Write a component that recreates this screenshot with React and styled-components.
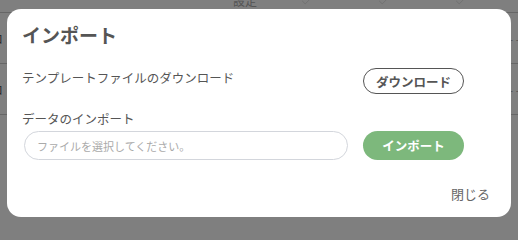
import React from "react";
import styled, { createGlobalStyle } from "styled-components";
import { Check } from "lucide-react";

const GlobalStyle = createGlobalStyle`
  html, body {
    margin: 0;
    padding: 0;
    background: #fff;
    overflow: hidden;
  }
  body {
    font-family: "Noto Sans CJK JP", "Noto Sans", sans-serif;
    color: #555;
  }
`;

const rows = [0, 1];

export default function App() {
  return (
    <>
      <GlobalStyle />
      <Page>
        <HeaderRow>
          <Cell />
          <HeadCell>設定</HeadCell>
          <Cell><Check size={14} strokeWidth={1.5} /></Cell>
          <Cell><Check size={14} strokeWidth={1.5} /></Cell>
          <Cell><Check size={14} strokeWidth={1.5} /></Cell>
          <Cell />
        </HeaderRow>
        {rows.map((r) => (
          <BodyRow key={r}>
            <FirstCell>ロ</FirstCell>
            <Cell />
            <Cell />
            <Cell />
            <Cell />
            <LastCell>- -</LastCell>
          </BodyRow>
        ))}
      </Page>

      <Overlay>
        <Modal>
          <Title>インポート</Title>
          <Section>
            <Row $align="flex-start">
              <Label>テンプレートファイルのダウンロード</Label>
              <OutlineButton>ダウンロード</OutlineButton>
            </Row>
            <Label $gap={15}>データのインポート</Label>
            <Row $align="center" $gap={2}>
              <FileInput placeholder="ファイルを選択してください。" readOnly />
              <FilledButton>インポート</FilledButton>
            </Row>
          </Section>
          <Footer>
            <CloseLink>閉じる</CloseLink>
          </Footer>
        </Modal>
      </Overlay>
    </>
  );
}

const Page = styled.div`
  width: 100%;
  margin-top: -6px;
`;

const gridCols = "222px 46px 77px 77px 77px 1fr";

const HeaderRow = styled.div`
  display: grid;
  grid-template-columns: ${gridCols};
  height: 18px;
  border-bottom: 1px solid #ccc;
  font-size: 13px;
  line-height: 14px;
`;

const BodyRow = styled.div`
  display: grid;
  grid-template-columns: ${gridCols};
  height: 50px;
  border-bottom: 1px solid #ccc;
  align-items: center;
  font-size: 12px;
`;

const Cell = styled.div`
  display: flex;
  justify-content: center;
  color: #ddd;
`;

const HeadCell = styled(Cell)`
  color: #aaa;
  font-size: 12px;
`;

const FirstCell = styled.div`
  margin-left: -9px;
  color: #555;
`;

const LastCell = styled.div`
  text-align: right;
  color: #aaa;
  margin-right: -2px;
`;

const Overlay = styled.div`
  position: fixed;
  inset: 0;
  background: rgba(0, 0, 0, 0.5);
  display: flex;
  align-items: flex-start;
  justify-content: center;
  padding-top: 9px;
`;

const Modal = styled.div`
  width: 504px;
  box-sizing: border-box;
  background: #fff;
  border-radius: 14px;
  padding: 14px 21px 13px 15px;
  display: flex;
  flex-direction: column;
`;

const Title = styled.h2`
  margin: 0;
  font-size: 19px;
  line-height: 24px;
  font-weight: 700;
  color: #555;
`;

const Section = styled.div`
  margin-top: 21px;
  padding-right: 26px;
  display: flex;
  flex-direction: column;
`;

const Row = styled.div`
  display: flex;
  align-items: ${(p) => p.$align};
  justify-content: space-between;
  margin-top: ${(p) => p.$gap || 0}px;
`;

const Label = styled.div`
  font-size: 12.5px;
  line-height: 20px;
  color: #555;
  margin-top: ${(p) => p.$gap || 0}px;
`;

const PillButton = styled.button`
  width: 101px;
  border-radius: 999px;
  font-family: inherit;
  font-size: 12.5px;
  font-weight: 700;
  padding: 0;
  cursor: pointer;
`;

const OutlineButton = styled(PillButton)`
  height: 26px;
  background: #fff;
  border: 1px solid #555;
  color: #555;
`;

const FilledButton = styled(PillButton)`
  height: 29px;
  background: #7db87c;
  border: none;
  color: #fff;
`;

const FileInput = styled.input`
  width: 324px;
  height: 29px;
  box-sizing: border-box;
  margin-left: 2px;
  border: 1px solid #d3d6dc;
  border-radius: 999px;
  padding: 0 12px;
  font-family: inherit;
  font-size: 11px;
  color: #555;
  outline: none;

  &::placeholder {
    color: #aaa;
  }
`;

const Footer = styled.div`
  margin-top: 24px;
  display: flex;
  justify-content: flex-end;
`;

const CloseLink = styled.span`
  font-size: 13px;
  line-height: 20px;
  color: #666;
  cursor: pointer;
`;
